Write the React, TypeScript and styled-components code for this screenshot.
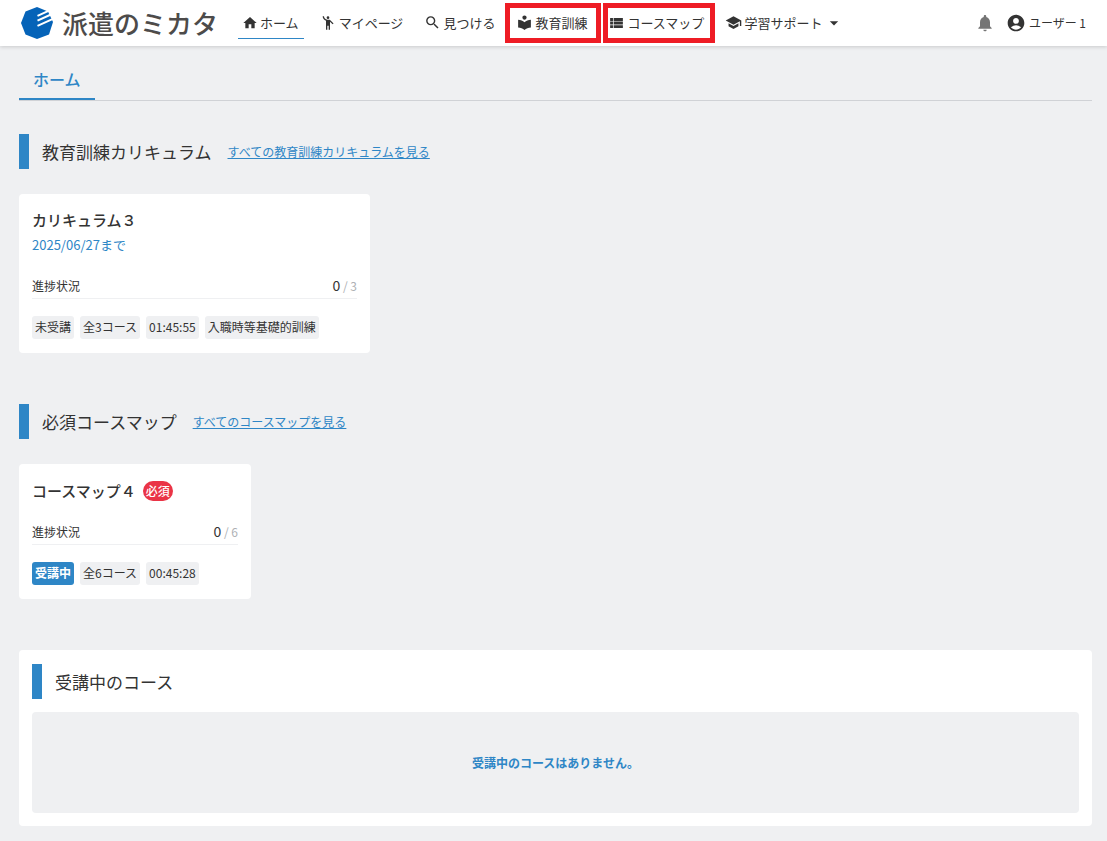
import React from "react";
import styled, { createGlobalStyle, css } from "styled-components";
import type { IconType } from "react-icons";
import {
  MdAccountCircle,
  MdArrowDropDown,
  MdEmojiPeople,
  MdHome,
  MdLocalLibrary,
  MdNotifications,
  MdSchool,
  MdSearch,
  MdViewList,
} from "react-icons/md";

const blue = "#2e86c6";
const ink = "#333333";
const surface = "#eff0f2";

const GlobalStyle = createGlobalStyle`
  *, *::before, *::after { box-sizing: border-box; }
  body {
    margin: 0;
    background: ${surface};
    color: ${ink};
    font-family: "Noto Sans CJK JP", "Noto Sans", sans-serif;
    font-size: 12px;
    line-height: 20px;
  }
  h1, h2, h3, p, ul { margin: 0; padding: 0; }
  ul { list-style: none; }
  button { font: inherit; color: inherit; background: none; border: 0; padding: 0; cursor: pointer; }
`;

const Header = styled.header`
  display: flex;
  align-items: center;
  height: 46px;
  padding: 0 21px;
  background: #fff;
  box-shadow: 0 1px 4px rgba(0, 0, 0, 0.16);
`;

const Brand = styled.a`
  display: flex;
  align-items: center;
  gap: 8px;
  width: 217px;
  flex: none;
  color: #4d4b4a;
  font-size: 26px;
  font-weight: 500;
  line-height: 40px;
  white-space: nowrap;
  text-decoration: none;
`;

const Nav = styled.nav`
  display: flex;
  gap: 13px;
`;

const navItem = css`
  position: relative;
  display: flex;
  align-items: center;
  gap: 2px;
  height: 32px;
  padding: 0 5px 0 3px;
  border-bottom: 1px solid transparent;
  font-size: 13px;
  line-height: 20px;
  white-space: nowrap;
`;

type Mark = { left: number; right: number };

const NavLink = styled.a<{ $active?: boolean; $mark?: Mark }>`
  ${navItem}
  color: ${ink};
  text-decoration: none;
  border-color: ${(p) => (p.$active ? blue : "transparent")};
  ${(p) =>
    p.$mark &&
    css`
      &::after {
        content: "";
        position: absolute;
        top: -4px;
        bottom: -5px;
        left: -${p.$mark.left}px;
        right: -${p.$mark.right}px;
        border: 5px solid #ee1c25;
      }
    `}
`;

const NavButton = styled.button`
  && {
    ${navItem}
  }
`;

const IconSlot = styled.span`
  display: flex;
  align-items: center;
  justify-content: center;
  width: 17px;
  flex: none;
`;

const Account = styled.div`
  display: flex;
  align-items: center;
  gap: 11px;
  margin-left: auto;
`;

const BellButton = styled.button`
  display: flex;
  && {
    color: #757575;
  }
`;

const UserButton = styled.button`
  display: flex;
  align-items: center;
  gap: 3px;
  white-space: nowrap;
`;

const Main = styled.main`
  padding: 14px 15px 15px 19px;
`;

const Tabs = styled.nav`
  display: flex;
  border-bottom: 1px solid #d0d2d6;
`;

const Tab = styled.a`
  padding: 8px 14px;
  border-bottom: 2px solid ${blue};
  color: ${blue};
  font-size: 16px;
  font-weight: 500;
  line-height: 22px;
  text-decoration: none;
`;

const Section = styled.section`
  padding-top: 33px;
  margin-bottom: 18px;
`;

const SectionHead = styled.div`
  display: flex;
  align-items: center;
  gap: 16px;
  height: 35px;
  padding-left: 13px;
  border-left: 10px solid ${blue};
`;

const SectionTitle = styled.h2`
  font-size: 17px;
  font-weight: 400;
  line-height: 24px;
`;

const MoreLink = styled.a`
  color: ${blue};
  text-decoration: underline;
`;

const Card = styled.article<{ $width: number }>`
  width: ${(p) => p.$width}px;
  max-width: 100%;
  margin-top: 25px;
  padding: 14px 13px;
  border-radius: 4px;
  background: #fff;
`;

const CardTitleRow = styled.div`
  display: flex;
  align-items: center;
  gap: 7px;
  min-height: 26px;
`;

const CardTitle = styled.h3`
  font-size: 15px;
  font-weight: 500;
  line-height: 24px;
`;

const Required = styled.span`
  padding: 0 3px;
  border-radius: 10px;
  background: #ea3446;
  color: #fff;
  font-weight: 500;
`;

const Deadline = styled.p`
  color: ${blue};
  font-size: 13px;
  line-height: 26px;
`;

const Progress = styled.div`
  display: flex;
  justify-content: space-between;
  align-items: center;
  margin-top: 17px;
  padding-bottom: 2px;
  border-bottom: 1px solid ${surface};
`;

const Count = styled.span`
  color: #aeb1b5;
`;

const Done = styled.span`
  color: ${ink};
  font-size: 14px;
`;

const Tags = styled.ul`
  display: flex;
  gap: 6px;
  margin-top: 17px;
`;

const Tag = styled.li<{ $current?: boolean }>`
  padding: 1px 3px 2px;
  border-radius: 3px;
  background: ${(p) => (p.$current ? blue : surface)};
  color: ${(p) => (p.$current ? "#fff" : ink)};
  font-weight: ${(p) => (p.$current ? 700 : 400)};
  white-space: nowrap;
`;

const Panel = styled.section`
  margin-top: 51px;
  padding: 14px 13px 13px;
  border-radius: 4px;
  background: #fff;
`;

const Empty = styled.p`
  display: flex;
  align-items: center;
  justify-content: center;
  min-height: 101px;
  margin-top: 13px;
  border-radius: 4px;
  background: ${surface};
  color: ${blue};
  font-weight: 700;
`;

function Logo() {
  return (
    <svg width="33" height="34" viewBox="0 0 33 34" aria-hidden="true">
      <path
        d="M16 1 L27 5.5 L32 16 L28 28.5 L16 33 L4.5 28.5 L0 17 L4.5 5.5 Z"
        fill="#0563b8"
      />
      <path
        d="M16.5 9.8 L27.5 4.8 M16.5 14.6 L31 8 M16.5 19.8 L32.5 12.6"
        stroke="#fff"
        strokeWidth="2"
        fill="none"
      />
    </svg>
  );
}

type NavEntry = {
  label: string;
  icon: IconType;
  size: number;
  active?: boolean;
  mark?: Mark;
};

const navEntries: NavEntry[] = [
  { label: "ホーム", icon: MdHome, size: 16, active: true },
  { label: "マイページ", icon: MdEmojiPeople, size: 16 },
  { label: "見つける", icon: MdSearch, size: 17 },
  { label: "教育訓練", icon: MdLocalLibrary, size: 17, mark: { left: 8, right: 9 } },
  { label: "コースマップ", icon: MdViewList, size: 18, mark: { left: 2, right: 6 } },
];

function ProgressRow({ done, total }: { done: number; total: number }) {
  return (
    <Progress>
      <span>進捗状況</span>
      <Count>
        <Done>{done}</Done> / {total}
      </Count>
    </Progress>
  );
}

export default function App() {
  return (
    <>
      <GlobalStyle />
      <Header>
        <Brand href="#">
          <Logo />
          派遣のミカタ
        </Brand>
        <Nav>
          {navEntries.map(({ label, icon: Icon, size, active, mark }) => (
            <NavLink key={label} href="#" $active={active} $mark={mark}>
              <IconSlot>
                <Icon size={size} />
              </IconSlot>
              {label}
            </NavLink>
          ))}
          <NavButton type="button">
            <IconSlot>
              <MdSchool size={17} />
            </IconSlot>
            学習サポート
            <MdArrowDropDown size={20} />
          </NavButton>
        </Nav>
        <Account>
          <BellButton type="button" aria-label="通知">
            <MdNotifications size={20} />
          </BellButton>
          <UserButton type="button">
            <MdAccountCircle size={20} />
            ユーザー 1
          </UserButton>
        </Account>
      </Header>

      <Main>
        <Tabs>
          <Tab href="#">ホーム</Tab>
        </Tabs>

        <Section>
          <SectionHead>
            <SectionTitle>教育訓練カリキュラム</SectionTitle>
            <MoreLink href="#">すべての教育訓練カリキュラムを見る</MoreLink>
          </SectionHead>
          <Card $width={351}>
            <CardTitle>カリキュラム３</CardTitle>
            <Deadline>2025/06/27まで</Deadline>
            <ProgressRow done={0} total={3} />
            <Tags>
              <Tag>未受講</Tag>
              <Tag>全3コース</Tag>
              <Tag>01:45:55</Tag>
              <Tag>入職時等基礎的訓練</Tag>
            </Tags>
          </Card>
        </Section>

        <Section>
          <SectionHead>
            <SectionTitle>必須コースマップ</SectionTitle>
            <MoreLink href="#">すべてのコースマップを見る</MoreLink>
          </SectionHead>
          <Card $width={232}>
            <CardTitleRow>
              <CardTitle>コースマップ４</CardTitle>
              <Required>必須</Required>
            </CardTitleRow>
            <ProgressRow done={0} total={6} />
            <Tags>
              <Tag $current>受講中</Tag>
              <Tag>全6コース</Tag>
              <Tag>00:45:28</Tag>
            </Tags>
          </Card>
        </Section>

        <Panel>
          <SectionHead>
            <SectionTitle>受講中のコース</SectionTitle>
          </SectionHead>
          <Empty>受講中のコースはありません。</Empty>
        </Panel>
      </Main>
    </>
  );
}
